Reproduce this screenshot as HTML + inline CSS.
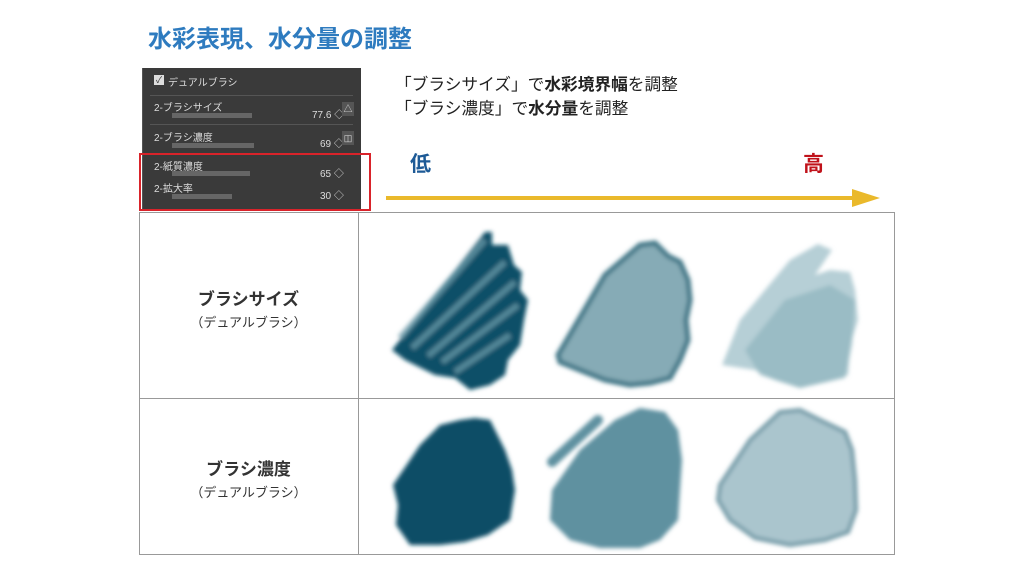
<!DOCTYPE html>
<html><head><meta charset="utf-8"><style>
body{margin:0;width:1024px;height:576px;background:#fff;position:relative;overflow:hidden;font-family:"Liberation Sans","Noto Sans CJK JP",sans-serif}
.a{position:absolute}
</style></head><body>
<div class="a" style="left:148px;top:19px;font-size:24px;font-weight:bold;color:#2e7bbf">水彩表現、水分量の調整</div>
<div class="a" style="left:142px;top:68px;width:218px;height:141px;background:#3a3a3a;border-left:1px solid #555"></div>
<div class="a" style="left:142px;top:68px;width:218px;height:141px;font-size:10px;color:#ddd">
 <div class="a" style="left:12px;top:7px;width:10px;height:10px;background:#ddd;color:#333;font-size:9px;line-height:10px;text-align:center">✓</div>
 <div class="a" style="left:26px;top:6px">デュアルブラシ</div>
 <div class="a" style="left:8px;top:27px;width:203px;border-top:1px solid #555"></div>
 <div class="a" style="left:12px;top:31px">2-ブラシサイズ</div>
 <div class="a" style="left:30px;top:45px;width:80px;height:5px;background:#666"></div>
 <div class="a" style="left:170px;top:38px">77.6 ◇</div>
 <div class="a" style="left:200px;top:34px;width:12px;height:14px;background:#555;font-size:9px;text-align:center;line-height:14px">△</div>
 <div class="a" style="left:8px;top:56px;width:203px;border-top:1px solid #555"></div>
 <div class="a" style="left:12px;top:61px">2-ブラシ濃度</div>
 <div class="a" style="left:30px;top:75px;width:82px;height:5px;background:#666"></div>
 <div class="a" style="left:178px;top:67px">69 ◇</div>
 <div class="a" style="left:200px;top:63px;width:12px;height:14px;background:#555;font-size:9px;text-align:center;line-height:14px">◫</div>
 <div class="a" style="left:12px;top:90px">2-紙質濃度</div>
 <div class="a" style="left:30px;top:103px;width:78px;height:5px;background:#666"></div>
 <div class="a" style="left:178px;top:97px">65 ◇</div>
 <div class="a" style="left:12px;top:112px">2-拡大率</div>
 <div class="a" style="left:30px;top:126px;width:60px;height:5px;background:#666"></div>
 <div class="a" style="left:178px;top:119px">30 ◇</div>
</div>
<div class="a" style="left:139px;top:153px;width:228px;height:54px;border:2px solid #d9232a"></div>
<div class="a" style="left:395px;top:73px;font-size:16.7px;color:#222;line-height:24px">「ブラシサイズ」で<b>水彩境界幅</b>を調整<br>「ブラシ濃度」で<b>水分量</b>を調整</div>
<div class="a" style="left:410px;top:148px;font-size:21px;font-weight:bold;color:#1d5a96">低</div>
<div class="a" style="left:803px;top:148px;font-size:21px;font-weight:bold;color:#c0121a">高</div>
<svg class="a" style="left:0;top:0" width="1024" height="576">
<defs><filter id="b"><feGaussianBlur stdDeviation="2"/></filter></defs>
<line x1="386" y1="198" x2="858" y2="198" stroke="#eab92b" stroke-width="4"/>
<polygon points="852,189 880,198 852,207" fill="#eab92b"/>
<rect x="139.5" y="212.5" width="755" height="342" fill="none" stroke="#999"/>
<line x1="358.5" y1="212" x2="358.5" y2="555" stroke="#999"/>
<line x1="139" y1="398.5" x2="895" y2="398.5" stroke="#999"/>
<g filter="url(#b)">
<path d="M392,350 L485,232 L492,232 L492,245 L508,245 L514,265 L522,272 L520,290 L528,300 L524,320 L520,345 L508,360 L505,375 L490,385 L470,390 L455,378 L435,375 L405,360 Z" fill="#0f5068"/>
<path d="M400,338 L485,240 M412,348 L505,262 M428,356 L515,282 M442,362 L518,305 M455,372 L510,335" stroke="#6b9aa8" stroke-width="6" fill="none" opacity=".75"/>
<path d="M558,355 L605,275 L640,245 L655,243 L668,256 L680,262 L688,280 L690,300 L686,320 L688,340 L680,360 L670,378 L650,383 L630,385 L605,380 L585,372 L560,362 Z" fill="#86abb6" stroke="#3e7585" stroke-width="5"/>
<path d="M722,365 L740,320 L790,260 L818,244 L832,250 L815,275 L830,270 L850,272 L855,290 L858,320 L850,345 L848,375 L825,382 L800,388 L775,380 L755,370 Z" fill="#b6cfd6"/>
<path d="M745,350 L785,300 L830,285 L855,300 L852,345 L845,378 L800,388 L760,375 Z" fill="#8fb3be" opacity=".7"/>
<path d="M393,485 L420,445 L440,425 L460,420 L475,418 L490,420 L500,440 L505,450 L512,470 L515,490 L510,520 L488,535 L465,542 L440,545 L410,545 L396,525 L398,505 Z" fill="#0d4e66"/>
<path d="M552,490 L580,450 L615,420 L640,408 L665,412 L678,430 L682,460 L680,490 L678,520 L660,540 L640,548 L600,548 L570,540 L550,520 Z" fill="#5e91a0"/>
<path d="M552,462 L598,420" stroke="#5e91a0" stroke-width="10" stroke-linecap="round"/>
<path d="M720,485 L750,440 L780,412 L800,410 L820,420 L845,432 L852,450 L855,480 L856,510 L848,532 L825,540 L790,545 L755,538 L730,520 L718,500 Z" fill="#aac5cd" stroke="#6f98a5" stroke-width="4"/>
</g>
</svg>
<div class="a" style="left:139px;top:285px;width:219px;text-align:center;color:#333"><div style="font-size:17px;font-weight:bold">ブラシサイズ</div><div style="font-size:13px;margin-top:2px">（デュアルブラシ）</div></div>
<div class="a" style="left:139px;top:455px;width:219px;text-align:center;color:#333"><div style="font-size:17px;font-weight:bold">ブラシ濃度</div><div style="font-size:13px;margin-top:2px">（デュアルブラシ）</div></div>
</body></html>
